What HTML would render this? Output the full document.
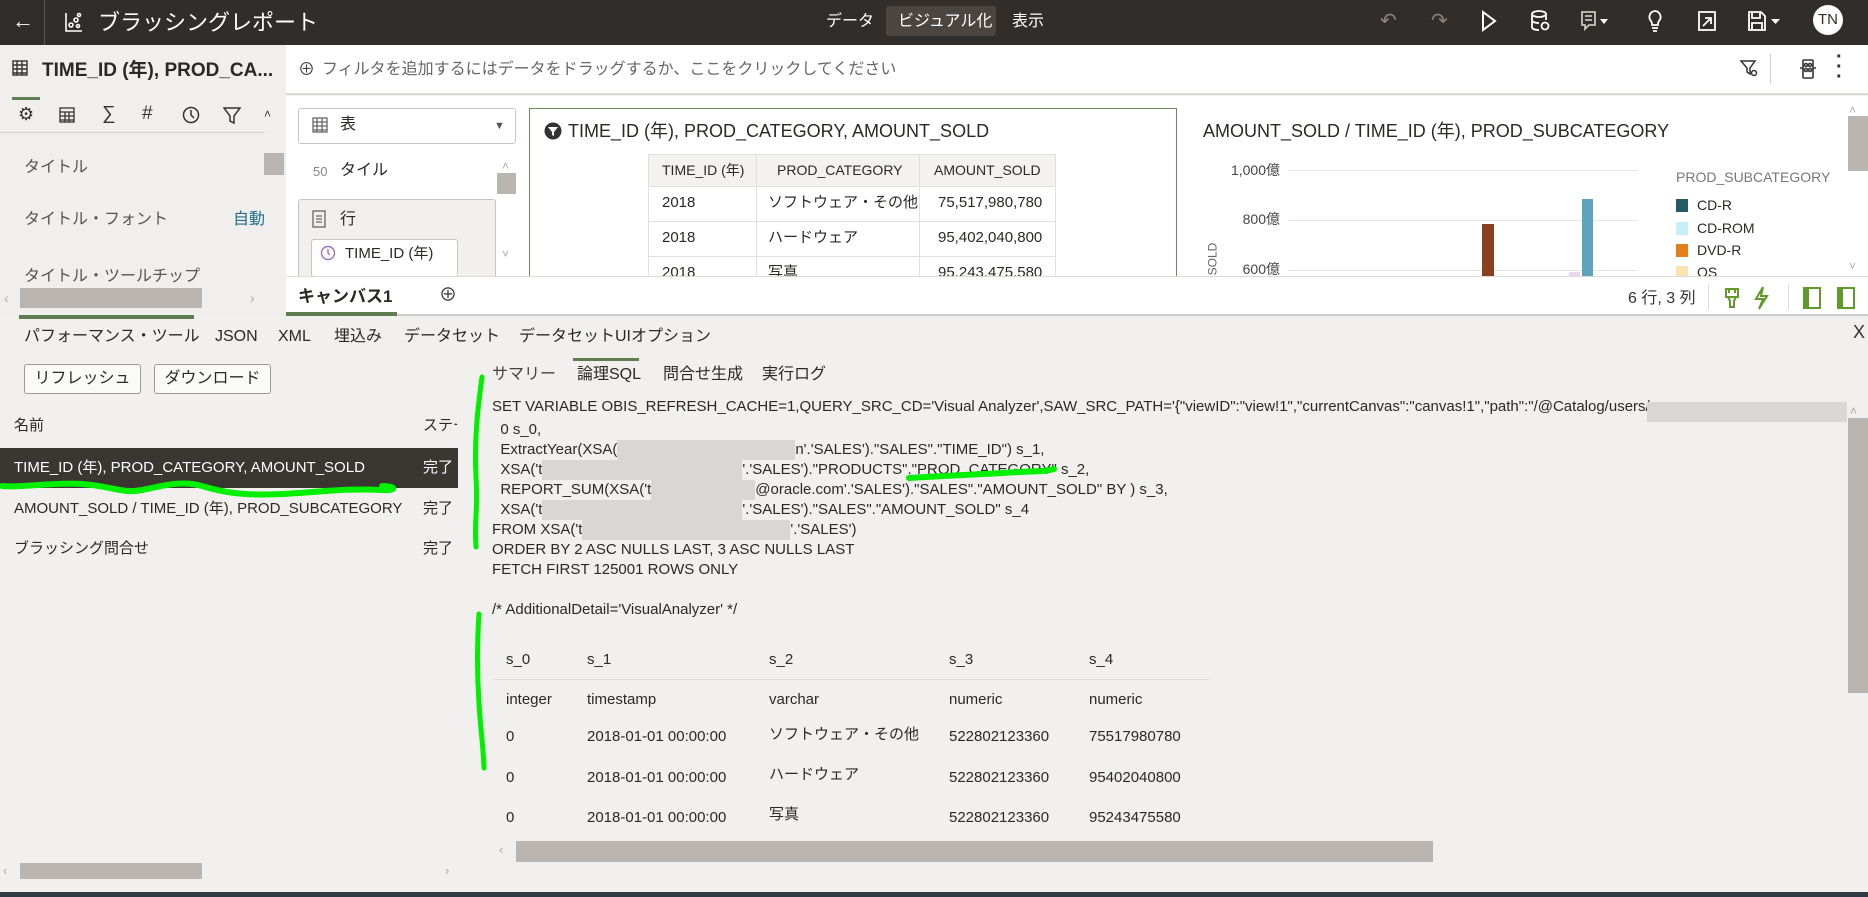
<!DOCTYPE html>
<html><head><meta charset="utf-8"><style>
*{margin:0;padding:0;box-sizing:border-box}
body{width:1868px;height:897px;overflow:hidden;background:#f1f0ee;font-family:"Liberation Sans","Noto Sans CJK JP",sans-serif;color:#2b2926;position:relative;font-size:15px}
.a{position:absolute;white-space:nowrap;line-height:20px}
.hdr{left:0;top:0;width:1868px;height:45px;background:#312d2a}
.w{color:#fff}
.g{background:#bab5b0}
.red{background:#d8d7d5;position:absolute}
.r{display:inline-block;height:20px;vertical-align:top;background:#d8d7d5}
.sql div{height:20px;line-height:20px}
</style></head><body>
<div class="a hdr"></div>
<div class="a" style="left:44px;top:0;width:1px;height:45px;background:#5a5550"></div>
<div class="a w" style="left:12px;top:11px;font-size:22px">←</div>
<svg class="a" style="left:64px;top:11px" width="20" height="22" viewBox="0 0 20 22" fill="none" stroke="#fff" stroke-width="1.6"><path d="M2 2v18h16"/><circle cx="7" cy="14" r="2"/><circle cx="12" cy="9" r="2"/><circle cx="15" cy="4" r="1.5"/><circle cx="14" cy="15" r="1.5"/></svg>
<div class="a w" style="left:98px;top:11px;font-size:22px;line-height:24px">ブラッシングレポート</div>
<div class="a w" style="left:826px;top:12px;font-size:16px">データ</div>
<div class="a" style="left:886px;top:6px;width:110px;height:30px;background:#4a4541;border-radius:3px"></div>
<div class="a w" style="left:898px;top:12px;font-size:16px">ビジュアル化</div>
<div class="a w" style="left:1012px;top:12px;font-size:16px">表示</div>
<div class="a" style="left:1380px;top:11px;color:#8a8580;font-size:20px">↶</div>
<div class="a" style="left:1431px;top:11px;color:#8a8580;font-size:20px">↷</div>
<svg class="a" style="left:1480px;top:10px" width="18" height="22"><path d="M3 2l12 9-12 9z" fill="none" stroke="#fff" stroke-width="2"/></svg>
<svg class="a" style="left:1530px;top:10px" width="20" height="22" fill="none" stroke="#fff" stroke-width="1.8"><ellipse cx="9" cy="4" rx="7" ry="3"/><path d="M2 4v13c0 2 3 3 7 3M16 4v6M2 10c0 2 3 3 7 3"/><circle cx="15" cy="16" r="3.5"/></svg>
<svg class="a" style="left:1580px;top:10px" width="30" height="22" fill="none" stroke="#c8c4c0" stroke-width="1.8"><path d="M2 2h13v13H9l-4 4v-4H2zM5 6h7M5 10h7"/><path d="M20 9h8l-4 5z" fill="#fff" stroke="none"/></svg>
<svg class="a" style="left:1646px;top:9px" width="18" height="24" fill="none" stroke="#fff" stroke-width="1.8"><path d="M9 2a6 6 0 0 0-4 10c1 1 1 3 1 4h6c0-1 0-3 1-4A6 6 0 0 0 9 2zM6 19h6M7 22h4"/></svg>
<svg class="a" style="left:1697px;top:10px" width="20" height="22" fill="none" stroke="#fff" stroke-width="1.8"><rect x="2" y="2" width="16" height="18"/><path d="M6 16l8-8M8 8h6v6"/></svg>
<svg class="a" style="left:1747px;top:10px" width="36" height="22" fill="none" stroke="#fff" stroke-width="1.8"><path d="M2 2h12l4 4v14H2zM5 2v6h8V2M5 20v-7h10v7"/><path d="M24 9h9l-4.5 5z" fill="#fff" stroke="none"/></svg>
<div class="a" style="left:1813px;top:5px;width:30px;height:30px;border-radius:50%;background:#fff;color:#312d2a;font-size:15px;line-height:30px;text-align:center">TN</div>

<!-- left panel -->
<div class="a" style="left:0;top:45px;width:286px;height:271px;background:#f0efed"></div>
<svg class="a" style="left:12px;top:60px" width="16" height="16" fill="none" stroke="#333" stroke-width="1.4"><rect x="1" y="1" width="14" height="14"/><path d="M1 5h14M1 9h14M1 13h14M5 1v14M10 1v14"/></svg>
<div class="a" style="left:42px;top:60px;font-size:19px;font-weight:bold;line-height:22px">TIME_ID (年), PROD_CA...</div>
<div class="a" style="left:12px;top:97px;width:28px;height:3px;background:#5f7d4f"></div>
<div class="a" style="left:18px;top:104px;font-size:18px;color:#333">⚙</div>
<svg class="a" style="left:59px;top:107px" width="16" height="16" fill="none" stroke="#333" stroke-width="1.3"><rect x="1" y="1" width="14" height="14"/><path d="M1 5h14M1 9h14M1 13h14M6 5v10M10 5v10"/></svg>
<div class="a" style="left:102px;top:104px;font-size:19px;color:#333">∑</div>
<div class="a" style="left:142px;top:104px;font-size:19px;color:#333">#</div>
<svg class="a" style="left:182px;top:106px" width="18" height="18" fill="none" stroke="#333" stroke-width="1.5"><circle cx="9" cy="9" r="7.5"/><path d="M9 4v5l3 3"/></svg>
<svg class="a" style="left:223px;top:106px" width="18" height="18" fill="none" stroke="#333" stroke-width="1.5"><path d="M1 2h16l-6 8v7l-4-2v-5z"/></svg>
<div class="a" style="left:264px;top:104px;font-size:12px;color:#333">˄</div>
<div class="a" style="left:0;top:132px;width:265px;height:1px;background:#d6d3cf"></div>
<div class="a g" style="left:264px;top:153px;width:20px;height:22px"></div>
<div class="a" style="left:24px;top:158px;font-size:16px;color:#555">タイトル</div>
<div class="a" style="left:24px;top:210px;font-size:16px;color:#555">タイトル・フォント</div>
<div class="a" style="left:233px;top:210px;font-size:16px;color:#1f6e8c">自動</div>
<div class="a" style="left:24px;top:267px;font-size:16px;color:#555">タイトル・ツールチップ</div>
<div class="a g" style="left:20px;top:288px;width:182px;height:20px"></div>
<div class="a" style="left:4px;top:288px;color:#aaa;font-size:14px">‹</div>
<div class="a" style="left:250px;top:288px;color:#aaa;font-size:14px">›</div>
<div class="a" style="left:19px;top:315px;width:175px;height:4px;background:#5f7d4f"></div>

<!-- filter bar -->
<div class="a" style="left:286px;top:45px;width:1582px;height:50px;background:#fff;border-bottom:2px solid #dcdad6"></div>
<div class="a" style="left:298px;top:60px;font-size:17px;color:#444">⊕</div>
<div class="a" style="left:322px;top:60px;font-size:16px;color:#666">フィルタを追加するにはデータをドラッグするか、ここをクリックしてください</div>
<svg class="a" style="left:1740px;top:59px" width="18" height="18" fill="none" stroke="#333" stroke-width="1.5"><path d="M1 2h14l-5 7v6l-3-2V9z"/><circle cx="14" cy="14" r="2.5"/></svg>
<div class="a" style="left:1770px;top:54px;width:1px;height:30px;background:#ccc"></div>
<svg class="a" style="left:1800px;top:58px" width="16" height="22" fill="none" stroke="#333" stroke-width="1.6"><rect x="3" y="2" width="10" height="18" rx="1"/><circle cx="6" cy="7" r="1.5"/><circle cx="10" cy="7" r="1.5"/><circle cx="6" cy="12" r="1.5"/><circle cx="10" cy="12" r="1.5"/><path d="M0 10h3M13 10h3"/></svg>
<div class="a" style="left:1836px;top:52px;font-size:20px;font-weight:bold;color:#333;line-height:10px">·<br>·<br>·</div>

<!-- canvas -->
<div class="a" style="left:286px;top:96px;width:1582px;height:180px;background:#fff"></div>
<div class="a" style="left:298px;top:108px;width:218px;height:36px;border:1px solid #c8c5c1;border-radius:3px;background:#fff"></div>
<svg class="a" style="left:312px;top:117px" width="16" height="16" fill="none" stroke="#666" stroke-width="1.3"><rect x="1" y="1" width="14" height="14"/><path d="M1 5h14M1 9h14M1 13h14M5 1v14M10 1v14"/></svg>
<div class="a" style="left:340px;top:115px;font-size:16px">表</div>
<div class="a" style="left:494px;top:116px;font-size:11px;color:#555">▼</div>
<div class="a" style="left:313px;top:162px;font-size:13px;color:#888">50</div>
<div class="a" style="left:340px;top:161px;font-size:16px">タイル</div>
<div class="a" style="left:502px;top:156px;font-size:12px;color:#aaa">˄</div>
<div class="a g" style="left:497px;top:173px;width:19px;height:21px"></div>
<div class="a" style="left:298px;top:199px;width:198px;height:80px;border:1px solid #c8c5c1;border-radius:3px;background:#f1f0ee"></div>
<svg class="a" style="left:312px;top:210px" width="14" height="18" fill="none" stroke="#666" stroke-width="1.3"><rect x="1" y="1" width="12" height="16"/><path d="M4 6h6M4 9h6M4 12h6"/></svg>
<div class="a" style="left:340px;top:210px;font-size:16px">行</div>
<div class="a" style="left:311px;top:239px;width:147px;height:38px;border:1px solid #c8c5c1;border-radius:3px;background:#fff"></div>
<svg class="a" style="left:320px;top:245px" width="16" height="16" fill="none" stroke="#9a72b8" stroke-width="1.4"><circle cx="8" cy="8" r="6.5"/><path d="M8 4v4l2 2"/></svg>
<div class="a" style="left:345px;top:244px;font-size:15px">TIME_ID (年)</div>
<div class="a" style="left:502px;top:244px;font-size:12px;color:#aaa">˅</div>

<div class="a" style="left:529px;top:108px;width:648px;height:170px;border:1px solid #6d8a5a;border-bottom:none"></div>
<svg class="a" style="left:544px;top:122px" width="18" height="18"><circle cx="9" cy="9" r="8.5" fill="#333"/><path d="M4 5h10l-4 5v4l-2-1v-3z" fill="#fff"/></svg>
<div class="a" style="left:568px;top:121px;font-size:18px">TIME_ID (年), PROD_CATEGORY, AMOUNT_SOLD</div>
<div class="a" style="left:648px;top:154px;width:408px;height:124px;border:1px solid #e2e0dc;border-bottom:none;background:#fff"></div>
<div class="a" style="left:649px;top:155px;width:406px;height:31px;background:#f3f2f0"></div>
<div class="a" style="left:756px;top:155px;width:1px;height:123px;background:#e2e0dc"></div>
<div class="a" style="left:919px;top:155px;width:1px;height:123px;background:#e2e0dc"></div>
<div class="a" style="left:649px;top:186px;width:406px;height:1px;background:#e2e0dc"></div>
<div class="a" style="left:649px;top:221px;width:406px;height:1px;background:#e2e0dc"></div>
<div class="a" style="left:649px;top:256px;width:406px;height:1px;background:#e2e0dc"></div>
<div class="a" style="left:662px;top:160px;font-size:14px">TIME_ID (年)</div>
<div class="a" style="left:777px;top:160px;font-size:14px">PROD_CATEGORY</div>
<div class="a" style="left:934px;top:160px;font-size:14px">AMOUNT_SOLD</div>
<div class="a" style="left:662px;top:193px;font-size:15px">2018</div><div class="a" style="left:768px;top:193px;font-size:15px">ソフトウェア・その他</div><div class="a" style="left:938px;top:193px;font-size:15px">75,517,980,780</div>
<div class="a" style="left:662px;top:228px;font-size:15px">2018</div><div class="a" style="left:768px;top:228px;font-size:15px">ハードウェア</div><div class="a" style="left:938px;top:228px;font-size:15px">95,402,040,800</div>
<div class="a" style="left:662px;top:263px;font-size:15px;height:13px;overflow:hidden">2018</div><div class="a" style="left:768px;top:263px;font-size:15px;height:13px;overflow:hidden">写真</div><div class="a" style="left:938px;top:263px;font-size:15px;height:13px;overflow:hidden">95,243,475,580</div>

<div class="a" style="left:1203px;top:121px;font-size:18px">AMOUNT_SOLD / TIME_ID (年), PROD_SUBCATEGORY</div>
<div class="a" style="left:1200px;top:160px;width:80px;text-align:right;font-size:14px;color:#444">1,000億</div>
<div class="a" style="left:1200px;top:209px;width:80px;text-align:right;font-size:14px;color:#444">800億</div>
<div class="a" style="left:1200px;top:259px;width:80px;text-align:right;font-size:14px;color:#444;height:17px;overflow:hidden">600億</div>
<div class="a" style="left:1288px;top:170px;width:350px;height:1px;background:#e6e4e1"></div>
<div class="a" style="left:1288px;top:220px;width:350px;height:1px;background:#e6e4e1"></div>
<div class="a" style="left:1288px;top:270px;width:350px;height:1px;background:#e6e4e1"></div>
<div class="a" style="left:1196px;top:252px;font-size:12px;color:#666;transform:rotate(-90deg);line-height:14px">SOLD</div>
<div class="a" style="left:1482px;top:224px;width:12px;height:52px;background:#8a3f1f"></div>
<div class="a" style="left:1582px;top:199px;width:11px;height:77px;background:#5ea3bd"></div>
<div class="a" style="left:1569px;top:272px;width:11px;height:4px;background:#ead6f3"></div>
<div class="a" style="left:1676px;top:167px;font-size:14px;color:#777">PROD_SUBCATEGORY</div>
<div class="a" style="left:1676px;top:199px;width:12px;height:13px;background:#245a63"></div><div class="a" style="left:1697px;top:195px;font-size:14px">CD-R</div>
<div class="a" style="left:1676px;top:222px;width:12px;height:13px;background:#c6f0f6"></div><div class="a" style="left:1697px;top:218px;font-size:14px">CD-ROM</div>
<div class="a" style="left:1676px;top:244px;width:12px;height:13px;background:#e37f18"></div><div class="a" style="left:1697px;top:240px;font-size:14px">DVD-R</div>
<div class="a" style="left:1676px;top:266px;width:12px;height:10px;background:#fbe3b2"></div><div class="a" style="left:1697px;top:262px;font-size:14px;height:14px;overflow:hidden">OS</div>
<div class="a" style="left:1849px;top:100px;font-size:12px;color:#aaa">˄</div>
<div class="a g" style="left:1848px;top:116px;width:20px;height:55px"></div>
<div class="a" style="left:1849px;top:256px;font-size:12px;color:#aaa">˅</div>

<!-- canvas tab bar -->
<div class="a" style="left:286px;top:276px;width:1582px;height:40px;background:#fff;border-top:1px solid #dcdad6;border-bottom:2px solid #cfccc8"></div>
<div class="a" style="left:298px;top:287px;font-size:17px;font-weight:bold">キャンバス1</div>
<div class="a" style="left:286px;top:312px;width:111px;height:4px;background:#5f7d4f"></div>
<div class="a" style="left:439px;top:285px;font-size:18px;color:#333">⊕</div>
<div class="a" style="left:1628px;top:289px;font-size:16px;color:#333">6 行, 3 列</div>
<div class="a" style="left:1708px;top:284px;width:1px;height:26px;background:#ddd"></div>
<svg class="a" style="left:1724px;top:287px" width="16" height="22" fill="none" stroke="#5f9a2a" stroke-width="2"><path d="M2 2h12v8H2zM5 2v4M11 2v4M4 10l2 4v6h4v-6l2-4"/></svg>
<svg class="a" style="left:1752px;top:286px" width="18" height="24" fill="none" stroke="#5f9a2a" stroke-width="2"><path d="M11 1L4 13h7l-4 10 8-13H9z"/></svg>
<div class="a" style="left:1788px;top:284px;width:1px;height:26px;background:#ddd"></div>
<div class="a" style="left:1803px;top:287px;width:18px;height:22px;border:2px solid #5f9a2a;border-left:6px solid #5f9a2a"></div>
<div class="a" style="left:1837px;top:287px;width:18px;height:22px;border:2px solid #5f9a2a;border-left:6px solid #5f9a2a"></div>

<!-- bottom panel -->
<div class="a" style="left:24px;top:327px;font-size:16px">パフォーマンス・ツール</div>
<div class="a" style="left:215px;top:327px;font-size:16px">JSON</div>
<div class="a" style="left:278px;top:327px;font-size:16px">XML</div>
<div class="a" style="left:334px;top:327px;font-size:16px">埋込み</div>
<div class="a" style="left:404px;top:327px;font-size:16px">データセット</div>
<div class="a" style="left:519px;top:327px;font-size:16px">データセットUIオプション</div>
<div class="a" style="left:1853px;top:322px;font-size:18px;color:#333">X</div>
<div class="a" style="left:24px;top:364px;width:117px;height:30px;border:1px solid #999;border-radius:3px;background:#fafaf9;font-size:16px;text-align:center;line-height:28px">リフレッシュ</div>
<div class="a" style="left:154px;top:364px;width:117px;height:30px;border:1px solid #999;border-radius:3px;background:#fafaf9;font-size:16px;text-align:center;line-height:28px">ダウンロード</div>
<div class="a" style="left:14px;top:416px;font-size:15px">名前</div>
<div class="a" style="left:423px;top:416px;font-size:15px;width:34px;overflow:hidden">ステータス</div>
<div class="a" style="left:0;top:448px;width:458px;height:40px;background:#3a3632"></div>
<div class="a w" style="left:14px;top:458px;font-size:15px">TIME_ID (年), PROD_CATEGORY, AMOUNT_SOLD</div>
<div class="a w" style="left:423px;top:458px;font-size:15px">完了</div>
<div class="a" style="left:14px;top:499px;font-size:15px">AMOUNT_SOLD / TIME_ID (年), PROD_SUBCATEGORY</div>
<div class="a" style="left:423px;top:499px;font-size:15px">完了</div>
<div class="a" style="left:14px;top:539px;font-size:15px">ブラッシング問合せ</div>
<div class="a" style="left:423px;top:539px;font-size:15px">完了</div>
<div class="a g" style="left:20px;top:863px;width:182px;height:16px"></div>
<div class="a" style="left:3px;top:861px;color:#aaa;font-size:13px">‹</div>
<div class="a" style="left:445px;top:861px;color:#aaa;font-size:13px">›</div>

<div class="a" style="left:492px;top:365px;font-size:16px;color:#444">サマリー</div>
<div class="a" style="left:577px;top:365px;font-size:16px">論理SQL</div>
<div class="a" style="left:573px;top:358px;width:66px;height:3px;background:#5f7d4f"></div>
<div class="a" style="left:663px;top:365px;font-size:16px">問合せ生成</div>
<div class="a" style="left:762px;top:365px;font-size:16px">実行ログ</div>

<div class="a sql" style="left:492px;top:397px;font-size:15px;width:1356px;overflow:hidden">
<div style="height:23px">SET VARIABLE OBIS_REFRESH_CACHE=1,QUERY_SRC_CD='Visual Analyzer',SAW_SRC_PATH='{"viewID":"view!1","currentCanvas":"canvas!1","path":"/@Catalog/users/</div>
<div>&nbsp;&nbsp;0 s_0,</div>
<div>&nbsp;&nbsp;ExtractYear(XSA(<span class="r" style="width:178px"></span>n'.'SALES')."SALES"."TIME_ID") s_1,</div>
<div>&nbsp;&nbsp;XSA('t<span class="r" style="width:200px"></span>'.'SALES')."PRODUCTS"."PROD_CATEGORY" s_2,</div>
<div>&nbsp;&nbsp;REPORT_SUM(XSA('t<span class="r" style="width:104px"></span>@oracle.com'.'SALES')."SALES"."AMOUNT_SOLD" BY ) s_3,</div>
<div>&nbsp;&nbsp;XSA('t<span class="r" style="width:200px"></span>'.'SALES')."SALES"."AMOUNT_SOLD" s_4</div>
<div>FROM XSA('t<span class="r" style="width:208px"></span>'.'SALES')</div>
<div>ORDER BY 2 ASC NULLS LAST, 3 ASC NULLS LAST</div>
<div>FETCH FIRST 125001 ROWS ONLY</div>
<div>&nbsp;</div>
<div>/* AdditionalDetail='VisualAnalyzer' */</div>
</div>
<div class="red" style="left:1647px;top:402px;width:200px;height:20px"></div>

<div class="a" style="left:494px;top:679px;width:715px;height:1px;background:#dedcd8"></div>
<div class="a" style="left:506px;top:650px">s_0</div><div class="a" style="left:587px;top:650px">s_1</div><div class="a" style="left:769px;top:650px">s_2</div><div class="a" style="left:949px;top:650px">s_3</div><div class="a" style="left:1089px;top:650px">s_4</div>
<div class="a" style="left:506px;top:690px">integer</div><div class="a" style="left:587px;top:690px">timestamp</div><div class="a" style="left:769px;top:690px">varchar</div><div class="a" style="left:949px;top:690px">numeric</div><div class="a" style="left:1089px;top:690px">numeric</div>
<div class="a" style="left:506px;top:727px">0</div><div class="a" style="left:587px;top:727px">2018-01-01 00:00:00</div><div class="a" style="left:769px;top:725px">ソフトウェア・その他</div><div class="a" style="left:949px;top:727px">522802123360</div><div class="a" style="left:1089px;top:727px">75517980780</div>
<div class="a" style="left:506px;top:768px">0</div><div class="a" style="left:587px;top:768px">2018-01-01 00:00:00</div><div class="a" style="left:769px;top:765px">ハードウェア</div><div class="a" style="left:949px;top:768px">522802123360</div><div class="a" style="left:1089px;top:768px">95402040800</div>
<div class="a" style="left:506px;top:808px">0</div><div class="a" style="left:587px;top:808px">2018-01-01 00:00:00</div><div class="a" style="left:769px;top:805px">写真</div><div class="a" style="left:949px;top:808px">522802123360</div><div class="a" style="left:1089px;top:808px">95243475580</div>
<div class="a" style="left:499px;top:840px;color:#aaa;font-size:13px">‹</div>
<div class="a g" style="left:516px;top:841px;width:917px;height:21px"></div>
<div class="a" style="left:1850px;top:401px;font-size:12px;color:#aaa">˄</div>
<div class="a g" style="left:1848px;top:418px;width:20px;height:275px"></div>
<div class="a" style="left:0;top:892px;width:1868px;height:5px;background:#2f3b45"></div>

<svg class="a" style="left:0;top:0;pointer-events:none" width="1868" height="897" fill="none" stroke="#00f000" stroke-linecap="round">
<path d="M2 486c20 2 50-4 80-2s40 10 60 6 40-10 60-4 40 10 80 8 60-6 100-4c15 1 15-4 0-4" stroke-width="6"/>
<path d="M482 377c-4 30-8 60-6 100s-2 40 0 70" stroke-width="5"/>
<path d="M909 478c30-2 80-4 110-6c15-1 25 0 35-3" stroke-width="6"/>
<path d="M479 614c-2 30-2 60 0 90s4 40 5 64" stroke-width="5"/>
</svg>
</body></html>
